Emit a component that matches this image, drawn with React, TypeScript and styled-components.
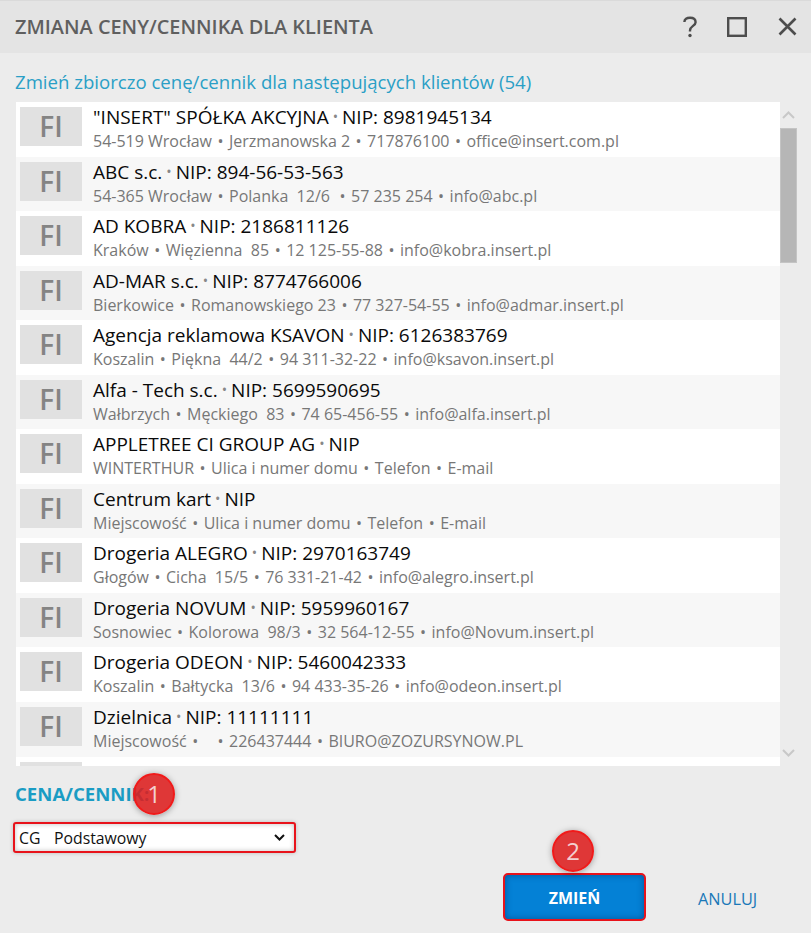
import React from 'react';
import styled, { createGlobalStyle } from 'styled-components';

const GlobalStyle = createGlobalStyle`
  html, body {
    margin: 0;
    padding: 0;
    background: #ececec;
  }
  * {
    box-sizing: border-box;
  }
`;

const Dialog = styled.div`
  position: relative;
  width: 811px;
  height: 933px;
  overflow: hidden;
  background: #ececec;
  font-family: 'Open Sans', 'Noto Sans', sans-serif;
  display: flex;
  flex-direction: column;
`;

const TitleBar = styled.header`
  height: 53px;
  flex: none;
  background: #e4e4e4;
  border-top: 1px solid #dadada;
  display: flex;
  align-items: center;
  padding: 0 14px 1px 15px;
`;

const Title = styled.h1`
  flex: 1;
  margin: 0;
  font-size: 19.9px;
  font-weight: 600;
  color: #5f5f5f;
  white-space: nowrap;
`;

const WindowIcons = styled.div`
  display: flex;
  align-items: center;
  gap: 27px;

  svg:last-child {
    margin-left: 4px;
  }
`;

const Lead = styled.div`
  margin: 18px 0 0 15px;
  height: 31px;
  font-size: 18.6px;
  line-height: 22px;
  color: #2a9fc6;
`;

const ListWrap = styled.div`
  display: flex;
  height: 664px;
  margin-left: 16px;
  flex: none;
`;

const List = styled.div`
  width: 764px;
  height: 664px;
  overflow: hidden;
  background: #fff;
`;

const Row = styled.div<{ $alt: boolean }>`
  display: flex;
  height: 54.55px;
  padding: 5px 0 0 4px;
  background: ${(p) => (p.$alt ? '#f7f7f7' : '#fff')};
`;

const Tile = styled.div`
  width: 62px;
  height: 39px;
  flex: none;
  background: #e1e1e1;
  color: #848484;
  font-size: 28px;
  font-weight: 600;
  text-align: center;
  line-height: 38px;
`;

const RowText = styled.div`
  margin: -1px 0 0 11px;
  white-space: nowrap;
`;

const RowTitle = styled.div`
  font-size: 19px;
  line-height: 23px;
  color: #0a0a0a;
`;

const RowSub = styled.div`
  font-size: 16px;
  line-height: 22px;
  color: #777;
`;

const Dot = styled.span`
  margin: 0 4px;
  font-size: 0.75em;
  position: relative;
  top: -2px;
  color: #888;
`;

const SubDot = styled.span`
  margin: 0 5.5px;
`;

const ScrollBar = styled.div`
  width: 17px;
  flex: none;
  display: flex;
  flex-direction: column;
  align-items: center;
`;

const ArrowBox = styled.div`
  height: 26px;
  display: flex;
  align-items: center;
  justify-content: center;
`;

const Thumb = styled.div`
  width: 17px;
  height: 135px;
  background: #b6b6b6;
  border: 1px solid #c4c4c4;
`;

const Spacer = styled.div`
  flex: 1;
`;

const Section = styled.div`
  margin: 16px 0 0 15px;
  font-size: 18.6px;
  font-weight: 700;
  line-height: 24px;
  color: #1a9cc4;
`;

const SelectBox = styled.div`
  width: 283px;
  height: 31px;
  margin: 16px 0 0 13px;
  border: 2px solid #e8131b;
  border-radius: 3px;
  background: #fff;
  box-shadow: inset 0 0 5px rgba(0, 0, 0, 0.25), 0 0 4px rgba(0, 0, 0, 0.2);
  display: flex;
  align-items: center;
  padding: 0 9px 0 4px;
  font-size: 15.8px;
  color: #111;
`;

const SelectCode = styled.span`
  width: 35px;
`;

const SelectValue = styled.span`
  flex: 1;
`;

const Actions = styled.div`
  display: flex;
  align-items: center;
  margin: 20px 0 0 503px;
`;

const PrimaryButton = styled.button`
  width: 143px;
  height: 48px;
  border: 2px solid #e8131b;
  border-radius: 5px;
  background: #0481d6;
  box-shadow: inset 0 0 6px rgba(0, 40, 90, 0.5);
  color: #fff;
  font-family: inherit;
  font-size: 16px;
  font-weight: 700;
  padding: 2px 0 0;
`;

const GhostButton = styled.button`
  margin-left: 52px;
  border: 0;
  background: none;
  color: #1a78b8;
  font-family: inherit;
  font-size: 16.3px;
  padding: 3px 0 0;
`;

const Badge = styled.div<{ $x: number; $y: number }>`
  position: absolute;
  left: ${(p) => p.$x}px;
  top: ${(p) => p.$y}px;
  width: 42px;
  height: 42px;
  border-radius: 50%;
  background: rgba(221, 30, 30, 0.88);
  border: 2px solid #f01a1a;
  box-shadow: 0 1px 6px rgba(0, 0, 0, 0.35);
  color: #f3d0d0;
  font-size: 24px;
  line-height: 37px;
  text-align: center;
`;

const clients = [
  ['"INSERT" SPÓŁKA AKCYJNA', 'NIP: 8981945134', ['54-519 Wrocław', 'Jerzmanowska 2', '717876100', 'office@insert.com.pl']],
  ['ABC s.c.', 'NIP: 894-56-53-563', ['54-365 Wrocław', 'Polanka  12/6 ', '57 235 254', 'info@abc.pl']],
  ['AD KOBRA', 'NIP: 2186811126', ['Kraków', 'Więzienna  85', '12 125-55-88', 'info@kobra.insert.pl']],
  ['AD-MAR s.c.', 'NIP: 8774766006', ['Bierkowice', 'Romanowskiego 23', '77 327-54-55', 'info@admar.insert.pl']],
  ['Agencja reklamowa KSAVON', 'NIP: 6126383769', ['Koszalin', 'Piękna  44/2', '94 311-32-22', 'info@ksavon.insert.pl']],
  ['Alfa - Tech s.c.', 'NIP: 5699590695', ['Wałbrzych', 'Męckiego  83', '74 65-456-55', 'info@alfa.insert.pl']],
  ['APPLETREE CI GROUP AG', 'NIP', ['WINTERTHUR', 'Ulica i numer domu', 'Telefon', 'E-mail']],
  ['Centrum kart', 'NIP', ['Miejscowość', 'Ulica i numer domu', 'Telefon', 'E-mail']],
  ['Drogeria ALEGRO', 'NIP: 2970163749', ['Głogów', 'Cicha  15/5', '76 331-21-42', 'info@alegro.insert.pl']],
  ['Drogeria NOVUM', 'NIP: 5959960167', ['Sosnowiec', 'Kolorowa  98/3', '32 564-12-55', 'info@Novum.insert.pl']],
  ['Drogeria ODEON', 'NIP: 5460042333', ['Koszalin', 'Bałtycka  13/6', '94 433-35-26', 'info@odeon.insert.pl']],
  ['Dzielnica', 'NIP: 11111111', ['Miejscowość', '  ', '226437444', 'BIURO@ZOZURSYNOW.PL']],
  ['Farmaceutyczna', 'NIP: 5710550480', ['Warszawa', 'Lipowa 1', '22 111-22-33', 'info@farm.insert.pl']],
] as const;

const App = () => {
  return (
    <Dialog>
      <GlobalStyle />
      <TitleBar>
        <Title>ZMIANA CENY/CENNIKA DLA KLIENTA</Title>
        <WindowIcons>
          <svg width="20" height="24" viewBox="0 0 20 24" fill="none" stroke="#4d4d4d" strokeWidth="2.4">
            <path d="M4.4 7c0-3 2.4-4.2 5.6-4.2s5.6 1.6 5.6 4.4c0 3.8-5.6 3.7-5.6 8.3v1" />
            <circle cx="10" cy="20.5" r="1.7" fill="#4d4d4d" stroke="none" />
          </svg>
          <svg width="20" height="20" viewBox="0 0 20 20" fill="none" stroke="#4d4d4d" strokeWidth="2.4">
            <rect x="1.2" y="1.2" width="17.6" height="17.6" />
          </svg>
          <svg width="19" height="19" viewBox="0 0 19 19" fill="none" stroke="#4d4d4d" strokeWidth="2.6">
            <path d="M1.5 1.5l16 16M17.5 1.5l-16 16" />
          </svg>
        </WindowIcons>
      </TitleBar>
      <Lead>Zmień zbiorczo cenę/cennik dla następujących klientów (54)</Lead>
      <ListWrap>
        <List>
          {clients.map(([name, nip, sub], i) => (
            <Row key={name} $alt={i % 2 === 1}>
              <Tile>FI</Tile>
              <RowText>
                <RowTitle>
                  {name}
                  <Dot>•</Dot>
                  {nip}
                </RowTitle>
                <RowSub>
                  {sub.map((part, j) => (
                    <React.Fragment key={j}>
                      {j > 0 && <SubDot>•</SubDot>}
                      <span style={{ whiteSpace: 'pre' }}>{part}</span>
                    </React.Fragment>
                  ))}
                </RowSub>
              </RowText>
            </Row>
          ))}
        </List>
        <ScrollBar>
          <ArrowBox>
            <svg width="13" height="8" viewBox="0 0 13 8" fill="none" stroke="#c8c8c8" strokeWidth="2">
              <path d="M1 7l5.5-5.5L12 7" />
            </svg>
          </ArrowBox>
          <Thumb />
          <Spacer />
          <ArrowBox>
            <svg width="13" height="8" viewBox="0 0 13 8" fill="none" stroke="#c8c8c8" strokeWidth="2">
              <path d="M1 1l5.5 5.5L12 1" />
            </svg>
          </ArrowBox>
        </ScrollBar>
      </ListWrap>
      <Section>CENA/CENNIK:</Section>
      <SelectBox>
        <SelectCode>CG</SelectCode>
        <SelectValue>Podstawowy</SelectValue>
        <svg width="11" height="7" viewBox="0 0 11 7" fill="none" stroke="#111" strokeWidth="2">
          <path d="M1 1l4.5 4.5L10 1" />
        </svg>
      </SelectBox>
      <Actions>
        <PrimaryButton>ZMIEŃ</PrimaryButton>
        <GhostButton>ANULUJ</GhostButton>
      </Actions>
      <Badge $x={133} $y={773}>1</Badge>
      <Badge $x={552} $y={830}>2</Badge>
    </Dialog>
  );
};

export default App;
